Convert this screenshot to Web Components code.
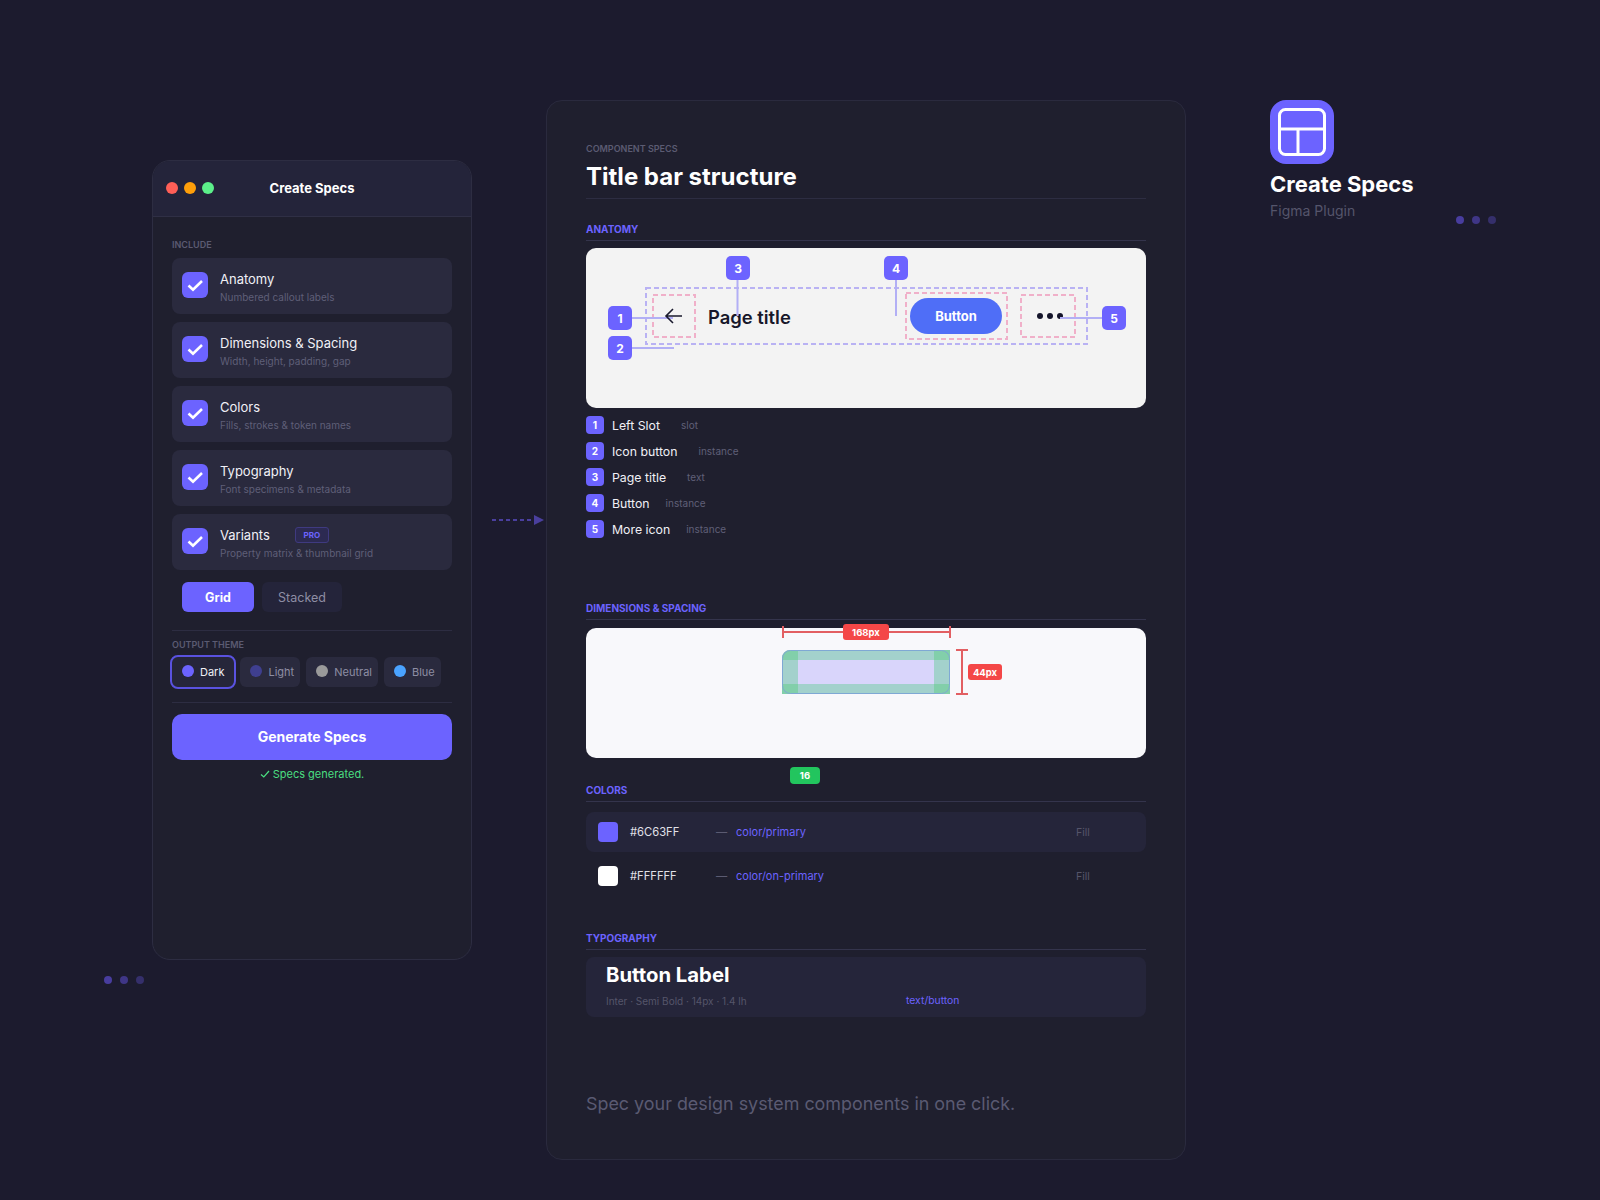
<!DOCTYPE html>
<html lang="en">
<head>
<meta charset="utf-8">
<title>Create Specs</title>
<style>
    html, body { margin: 0; background: #1c1b2e; }
    body { width: 1600px; height: 1200px; overflow: hidden; font-family: Inter, "Liberation Sans", sans-serif; }
</style>
</head>
<body>
<design-stage>
    <plugin-window></plugin-window>
    <flow-arrow></flow-arrow>
    <spec-panel></spec-panel>
    <brand-block></brand-block>
</design-stage>

<script>
class DesignStage extends HTMLElement {
    constructor() {
        super();
        this.attachShadow({ mode: 'open' });
        this.shadowRoot.innerHTML = `
            <style>
                :host { display: flex; align-items: flex-start; position: relative; width: 1600px; height: 1200px; box-sizing: border-box; padding: 100px 0 0 152px; }
                dot-trio.izq { position: absolute; left: 104px; top: 976px; }
                dot-trio.der { position: absolute; left: 1456px; top: 216px; }
            </style>
            <slot></slot>
            <dot-trio class="izq"></dot-trio>
            <dot-trio class="der"></dot-trio>
        `;
    }
}

class DotTrio extends HTMLElement {
    constructor() {
        super();
        this.attachShadow({ mode: 'open' });
        this.shadowRoot.innerHTML = `
            <style>
                :host { display: flex; gap: 8px; }
                i { width: 8px; height: 8px; border-radius: 50%; background: #483d9e; }
                i.b { background: #3f3686; }
                i.c { background: #352f6b; }
            </style>
            <i></i><i class="b"></i><i class="c"></i>
        `;
    }
}

class FlowArrow extends HTMLElement {
    constructor() {
        super();
        this.attachShadow({ mode: 'open' });
        this.shadowRoot.innerHTML = `
            <style>:host { display: block; width: 54px; height: 12px; margin: 414px 0 0 20px; flex: none; } svg { display: block; }</style>
            <svg width="54" height="12" viewBox="0 0 54 12">
                <path d="M0 6H42" stroke="#4a3f9e" stroke-width="2" stroke-dasharray="4 3" fill="none"/>
                <path d="M42 1L52 6L42 11Z" fill="#4a3f9e"/>
            </svg>
        `;
    }
}

class OptionRow extends HTMLElement {
    constructor() {
        super();
        this.attachShadow({ mode: 'open' });
        this.shadowRoot.innerHTML = `
            <style>
                :host { display: flex; height: 56px; box-sizing: border-box; padding: 14px 10px 0; gap: 12px; background: #2a2a3e; border-radius: 8px; }
                .caja { width: 26px; height: 26px; border-radius: 6px; background: #6c63ff; flex: none; }
                svg { display: block; }
                .textos { margin-top: -2px; }
                .titulo { display: flex; align-items: center; gap: 25px; font-size: 13px; line-height: 18px; color: #f0f0f6; }
                .sub { margin-top: 2px; font-size: 10px; line-height: 14px; color: #5f5f78; }
            </style>
            <div class="caja">
                <svg width="26" height="26" viewBox="0 0 26 26"><path d="M6.5 13.5L11 17.7L20 9" fill="none" stroke="#fff" stroke-width="2.6"/></svg>
            </div>
            <div class="textos">
                <div class="titulo"><span>${this.getAttribute('titulo')}</span><slot></slot></div>
                <div class="sub">${this.getAttribute('sub')}</div>
            </div>
        `;
    }
}

class ProBadge extends HTMLElement {
    constructor() {
        super();
        this.attachShadow({ mode: 'open' });
        this.shadowRoot.innerHTML = `
            <style>
                :host { display: flex; align-items: center; justify-content: center; width: 34px; height: 16px; box-sizing: border-box; border: 1px solid #3f3a80; border-radius: 3px; background: #2c2a52; color: #6c63ff; font-size: 8px; font-weight: 700; }
            </style>
            <slot></slot>
        `;
    }
}

class ThemeChip extends HTMLElement {
    constructor() {
        super();
        this.attachShadow({ mode: 'open' });
        this.shadowRoot.innerHTML = `
            <style>
                :host { display: flex; align-items: center; gap: 6px; height: 30px; box-sizing: border-box; padding: 0 6px 0 10px; background: #2a2a3e; border-radius: 6px; color: #8e8ea4; font-size: 11px; }
                :host([activo]) { padding: 0 10px; color: #f0f0f6; background: #26263a; outline: 2px solid #5a52e0; outline-offset: 0; }
                i { width: 12px; height: 12px; border-radius: 50%; background: ${this.getAttribute('color')}; margin-top: -2px; }
            </style>
            <i></i><slot></slot>
        `;
    }
}

class PluginWindow extends HTMLElement {
    constructor() {
        super();
        this.attachShadow({ mode: 'open' });
        this.shadowRoot.innerHTML = `
            <style>
                :host { display: block; width: 320px; height: 800px; margin-top: 60px; box-sizing: border-box; background: #1f1f2e; border: 1px solid #2d2d42; border-radius: 18px; overflow: hidden; flex: none; }
                header { display: grid; grid-template-columns: 1fr auto 1fr; align-items: center; height: 54px; padding: 0 13px 1px; background: #24243a; border-bottom: 1px solid #2f2f45; font-size: 13px; font-weight: 700; color: #fff; }
                .luces { display: flex; gap: 6px; }
                .luces i { width: 12px; height: 12px; border-radius: 50%; }
                main { padding: 22px 19px 0; }
                .etiqueta { font-size: 9px; line-height: 12px; font-weight: 600; color: #5b5b72; }
                .filas { display: flex; flex-direction: column; gap: 8px; margin-top: 7px; }
                .modo { display: flex; gap: 8px; margin: 12px 0 0 10px; }
                .modo span { display: flex; align-items: center; justify-content: center; height: 30px; border-radius: 6px; font-size: 13px; }
                .modo .on { width: 72px; background: #6c63ff; color: #fff; font-weight: 700; font-size: 12.5px; }
                .modo .off { width: 80px; background: #24243a; color: #8e8ea4; font-size: 12.5px; }
                hr { border: 0; border-top: 1px solid #2d2d42; margin: 0; }
                .chips { display: flex; gap: 6px; margin-top: 6px; }
                button { display: block; width: 100%; height: 46px; margin-top: 11px; padding: 0 0 2px; border: 0; border-radius: 10px; background: #6c63ff; color: #fff; font: 700 14px Inter, sans-serif; }
                .estado { display: flex; justify-content: center; align-items: center; gap: 3px; margin-top: 6px; height: 16px; font-size: 11px; color: #4ade80; }
            </style>
            <header>
                <div class="luces"><i style="background:#ff5f57"></i><i style="background:#ff9f0a"></i><i style="background:#5cf08a"></i></div>
                <div>Create Specs</div>
                <div></div>
            </header>
            <main>
                <div class="etiqueta">INCLUDE</div>
                <div class="filas">
                    <option-row titulo="Anatomy" sub="Numbered callout labels"></option-row>
                    <option-row titulo="Dimensions &amp; Spacing" sub="Width, height, padding, gap"></option-row>
                    <option-row titulo="Colors" sub="Fills, strokes &amp; token names"></option-row>
                    <option-row titulo="Typography" sub="Font specimens &amp; metadata"></option-row>
                    <option-row titulo="Variants" sub="Property matrix &amp; thumbnail grid"><pro-badge>PRO</pro-badge></option-row>
                </div>
                <div class="modo"><span class="on">Grid</span><span class="off">Stacked</span></div>
                <hr style="margin-top:18px">
                <div class="etiqueta" style="margin-top:8px">OUTPUT THEME</div>
                <div class="chips">
                    <theme-chip activo color="#6c63ff">Dark</theme-chip>
                    <theme-chip color="#3f3f8f">Light</theme-chip>
                    <theme-chip color="#9a9a9a">Neutral</theme-chip>
                    <theme-chip color="#4aa3ff">Blue</theme-chip>
                </div>
                <hr style="margin-top:15px">
                <button>Generate Specs</button>
                <div class="estado">
                    <svg width="10" height="10" viewBox="0 0 10 10"><path d="M1 5.5L3.8 8L9 2" fill="none" stroke="#4ade80" stroke-width="1.2"/></svg>
                    <span>Specs generated.</span>
                </div>
            </main>
        `;
    }
}

class NumBadge extends HTMLElement {
    constructor() {
        super();
        this.attachShadow({ mode: 'open' });
        this.shadowRoot.innerHTML = `
            <style>
                :host { display: flex; align-items: center; justify-content: center; flex: none; width: 24px; height: 24px; border-radius: 5px; background: #6c63ff; color: #fff; font-size: 12px; font-weight: 700; }
                :host([chico]) { width: 18px; height: 18px; border-radius: 4px; font-size: 10px; }
            </style>
            <slot></slot>
        `;
    }
}

class SpecSection extends HTMLElement {
    constructor() {
        super();
        this.attachShadow({ mode: 'open' });
        this.shadowRoot.innerHTML = `
            <style>
                :host { display: block; }
                h3 { margin: 0 0 7px; padding-bottom: 5px; border-bottom: 1px solid #34344c; font-size: 10px; line-height: 12px; font-weight: 700; color: #6c63ff; }
            </style>
            <h3>${this.getAttribute('titulo')}</h3>
            <slot></slot>
        `;
    }
}

class AnatomyPreview extends HTMLElement {
    constructor() {
        super();
        this.attachShadow({ mode: 'open' });
        const linea = 'stroke="#b2aff5" stroke-width="2"';
        this.shadowRoot.innerHTML = `
            <style>
                :host { display: block; position: relative; height: 160px; background: #f3f3f3; border-radius: 10px; }
                svg { position: absolute; inset: 0; }
                num-badge { position: absolute; }
                .titulo { position: absolute; left: 122px; top: 57px; font-size: 18.4px; line-height: 24px; font-weight: 600; color: #17172a; }
                .boton { position: absolute; left: 324px; top: 50px; width: 92px; height: 36px; display: flex; align-items: center; justify-content: center; border-radius: 18px; background: #4f6ef7; color: #fff; font-size: 13px; font-weight: 700; }
            </style>
            <div class="titulo">Page title</div>
            <div class="boton">Button</div>
            <svg width="560" height="160" viewBox="0 0 560 160">
                <g fill="none" stroke-width="2" stroke-dasharray="5 3">
                    <rect x="60" y="40" width="441" height="56" stroke="#b9b2f3"/>
                    <rect x="67" y="47" width="42" height="42" stroke="#f0b0c9"/>
                    <rect x="320" y="45" width="101" height="46" stroke="#f0b0c9"/>
                    <rect x="435" y="47" width="54" height="42" stroke="#f0b0c9"/>
                </g>
                <path d="M46 70H87" ${linea}/>
                <path d="M96 68H81M87 61L80 68L87 75" fill="none" stroke="#1a1a2e" stroke-width="1.6"/>
                <circle cx="454" cy="68" r="3" fill="#14142a"/><circle cx="464" cy="68" r="3" fill="#14142a"/><circle cx="474" cy="68" r="3" fill="#14142a"/>
                <path d="M46 100H88" ${linea}/>
                <path d="M151.5 32V68" ${linea}/>
                <path d="M310 32V68" ${linea}/>
                <path d="M474 70H516" ${linea}/>
            </svg>
            <num-badge style="left:22px;top:58px">1</num-badge>
            <num-badge style="left:22px;top:88px">2</num-badge>
            <num-badge style="left:140px;top:8px">3</num-badge>
            <num-badge style="left:298px;top:8px">4</num-badge>
            <num-badge style="left:516px;top:58px">5</num-badge>
        `;
    }
}

class LegendRow extends HTMLElement {
    constructor() {
        super();
        this.attachShadow({ mode: 'open' });
        this.shadowRoot.innerHTML = `
            <style>
                :host { display: flex; align-items: center; height: 18px; }
                .nombre { margin-left: 8px; font-size: 12.3px; color: #f0f0f6; }
                .tipo { margin-left: ${this.getAttribute('hueco') || 21}px; font-size: 10px; color: #5f5f78; }
            </style>
            <num-badge chico>${this.getAttribute('n')}</num-badge>
            <span class="nombre">${this.getAttribute('nombre')}</span>
            <span class="tipo">${this.getAttribute('tipo')}</span>
        `;
    }
}

class DimensionPreview extends HTMLElement {
    constructor() {
        super();
        this.attachShadow({ mode: 'open' });
        const rojo = 'stroke="#e25f62" stroke-width="2"';
        this.shadowRoot.innerHTML = `
            <style>
                :host { display: block; position: relative; height: 130px; margin-top: 8px; background: #f8f8fb; border-radius: 10px; }
                svg { position: absolute; inset: 0; overflow: visible; }
                span { position: absolute; display: flex; align-items: center; justify-content: center; height: 16px; background: #f44747; border-radius: 3px; color: #fff; font-size: 9.5px; font-weight: 700; }
            </style>
            <svg width="560" height="130" viewBox="0 0 560 130">
                <rect x="196" y="22" width="168" height="44" rx="8" fill="#d9d5fb"/>
                <path d="M212 22H348V32H212ZM212 56H348V66H212ZM196 32H212V56H196ZM348 32H364V56H348Z" fill="#a3d1cc"/>
                <path d="M204 22H212V32H196V30A8 8 0 0 1 204 22ZM348 22H364V32H348ZM196 56H212V66H196ZM348 56H364V66H348Z" fill="#82cfaa"/>
                <rect x="196.5" y="22.5" width="167" height="43" rx="8" fill="none" stroke="#7fa8d4"/>
                <path d="M196 4H364M197 -2V10M364 -2V10" ${rojo}/>
                <path d="M376 22V66M370 22H382M370 66H382" ${rojo}/>
            </svg>
            <span style="left:257px;top:-4px;width:46px">168px</span>
            <span style="left:382px;top:36px;width:34px">44px</span>
            <span style="left:204px;top:139px;width:30px;height:17px;background:#22c55e;border-radius:4px">16</span>
        `;
    }
}

class ColorRow extends HTMLElement {
    constructor() {
        super();
        this.attachShadow({ mode: 'open' });
        this.shadowRoot.innerHTML = `
            <style>
                :host { display: grid; grid-template-columns: 32px 86px 20px 340px 1fr; align-items: center; height: 40px; padding-left: 12px; border-radius: 8px; font-size: 11.2px; }
                :host([relleno]) { background: #25253a; }
                i { width: 20px; height: 20px; border-radius: 4px; background: ${this.getAttribute('hex')}; }
                .hex { color: #e0e0e8; }
                .raya { color: #5b5b72; }
                .token { color: #6c63ff; font-size: 11px; }
                .uso { font-size: 10.5px; color: #55556a; }
            </style>
            <i></i>
            <span class="hex">${this.getAttribute('hex')}</span>
            <span class="raya">—</span>
            <span class="token">${this.getAttribute('token')}</span>
            <span class="uso">Fill</span>
        `;
    }
}

class TypeCard extends HTMLElement {
    constructor() {
        super();
        this.attachShadow({ mode: 'open' });
        this.shadowRoot.innerHTML = `
            <style>
                :host { display: block; height: 60px; box-sizing: border-box; padding: 6px 20px 0; background: #25253a; border-radius: 8px; }
                .muestra { font-size: 20.3px; line-height: 24px; font-weight: 700; color: #fff; }
                .meta { display: grid; grid-template-columns: 300px auto; justify-content: start; margin-top: 7px; font-size: 10px; line-height: 14px; color: #55556a; }
                .meta b { font-weight: 400; color: #6c63ff; font-size: 10.4px; }
            </style>
            <div class="muestra">Button Label</div>
            <div class="meta"><span>Inter · Semi Bold · 14px · 1.4 lh</span><b>text/button</b></div>
        `;
    }
}

class SpecPanel extends HTMLElement {
    constructor() {
        super();
        this.attachShadow({ mode: 'open' });
        this.shadowRoot.innerHTML = `
            <style>
                :host { display: block; width: 640px; height: 1060px; box-sizing: border-box; padding: 42px 39px 0; background: #1f1f2e; border: 1px solid #2a2a3e; border-radius: 16px; flex: none; }
                .pre { font-size: 9px; line-height: 12px; font-weight: 600; color: #5b5b72; }
                h1 { margin: 6px 0 0; padding-bottom: 5px; border-bottom: 1px solid #2d2d42; font-size: 24px; line-height: 32px; font-weight: 700; color: #fff; }
                .leyenda { display: flex; flex-direction: column; gap: 8px; margin-top: 8px; }
                .colores { display: flex; flex-direction: column; gap: 4px; margin-top: 10px; }
                p { margin: 75px 0 0; font-size: 17.9px; line-height: 24px; color: #5a5a72; }
            </style>
            <div class="pre">COMPONENT SPECS</div>
            <h1>Title bar structure</h1>

            <spec-section titulo="ANATOMY" style="margin-top:24px">
                <anatomy-preview></anatomy-preview>
                <div class="leyenda">
                    <legend-row n="1" nombre="Left Slot" tipo="slot"></legend-row>
                    <legend-row n="2" nombre="Icon button" tipo="instance"></legend-row>
                    <legend-row n="3" nombre="Page title" tipo="text"></legend-row>
                    <legend-row n="4" nombre="Button" tipo="instance" hueco="16"></legend-row>
                    <legend-row n="5" nombre="More icon" tipo="instance" hueco="16"></legend-row>
                </div>
            </spec-section>

            <spec-section titulo="DIMENSIONS &amp; SPACING" style="margin-top:64px">
                <dimension-preview></dimension-preview>
            </spec-section>

            <spec-section titulo="COLORS" style="margin-top:26px">
                <div class="colores">
                    <color-row relleno hex="#6C63FF" token="color/primary"></color-row>
                    <color-row hex="#FFFFFF" token="color/on-primary"></color-row>
                </div>
            </spec-section>

            <spec-section titulo="TYPOGRAPHY" style="margin-top:36px">
                <type-card></type-card>
            </spec-section>

            <p>Spec your design system components in one click.</p>
        `;
    }
}

class BrandBlock extends HTMLElement {
    constructor() {
        super();
        this.attachShadow({ mode: 'open' });
        this.shadowRoot.innerHTML = `
            <style>
                :host { display: block; margin-left: 84px; }
                svg { display: block; }
                h2 { margin: 5px 0 0; font-size: 22px; line-height: 30px; font-weight: 700; color: #fff; }
                span { display: block; margin-top: 3px; font-size: 14px; line-height: 18px; color: #55556b; }
            </style>
            <svg width="64" height="64" viewBox="0 0 64 64">
                <rect width="64" height="64" rx="16" fill="#6c63ff"/>
                <rect x="9.5" y="9.5" width="45" height="45" rx="6" fill="none" stroke="#fff" stroke-width="3"/>
                <path d="M9.5 29H54.5M28 29V54.5" fill="none" stroke="#fff" stroke-width="3"/>
            </svg>
            <h2>Create Specs</h2>
            <span>Figma Plugin</span>
        `;
    }
}

customElements.define('dot-trio', DotTrio);
customElements.define('flow-arrow', FlowArrow);
customElements.define('pro-badge', ProBadge);
customElements.define('option-row', OptionRow);
customElements.define('theme-chip', ThemeChip);
customElements.define('num-badge', NumBadge);
customElements.define('legend-row', LegendRow);
customElements.define('color-row', ColorRow);
customElements.define('type-card', TypeCard);
customElements.define('spec-section', SpecSection);
customElements.define('anatomy-preview', AnatomyPreview);
customElements.define('dimension-preview', DimensionPreview);
customElements.define('plugin-window', PluginWindow);
customElements.define('spec-panel', SpecPanel);
customElements.define('brand-block', BrandBlock);
customElements.define('design-stage', DesignStage);
</script>
</body>
</html>
